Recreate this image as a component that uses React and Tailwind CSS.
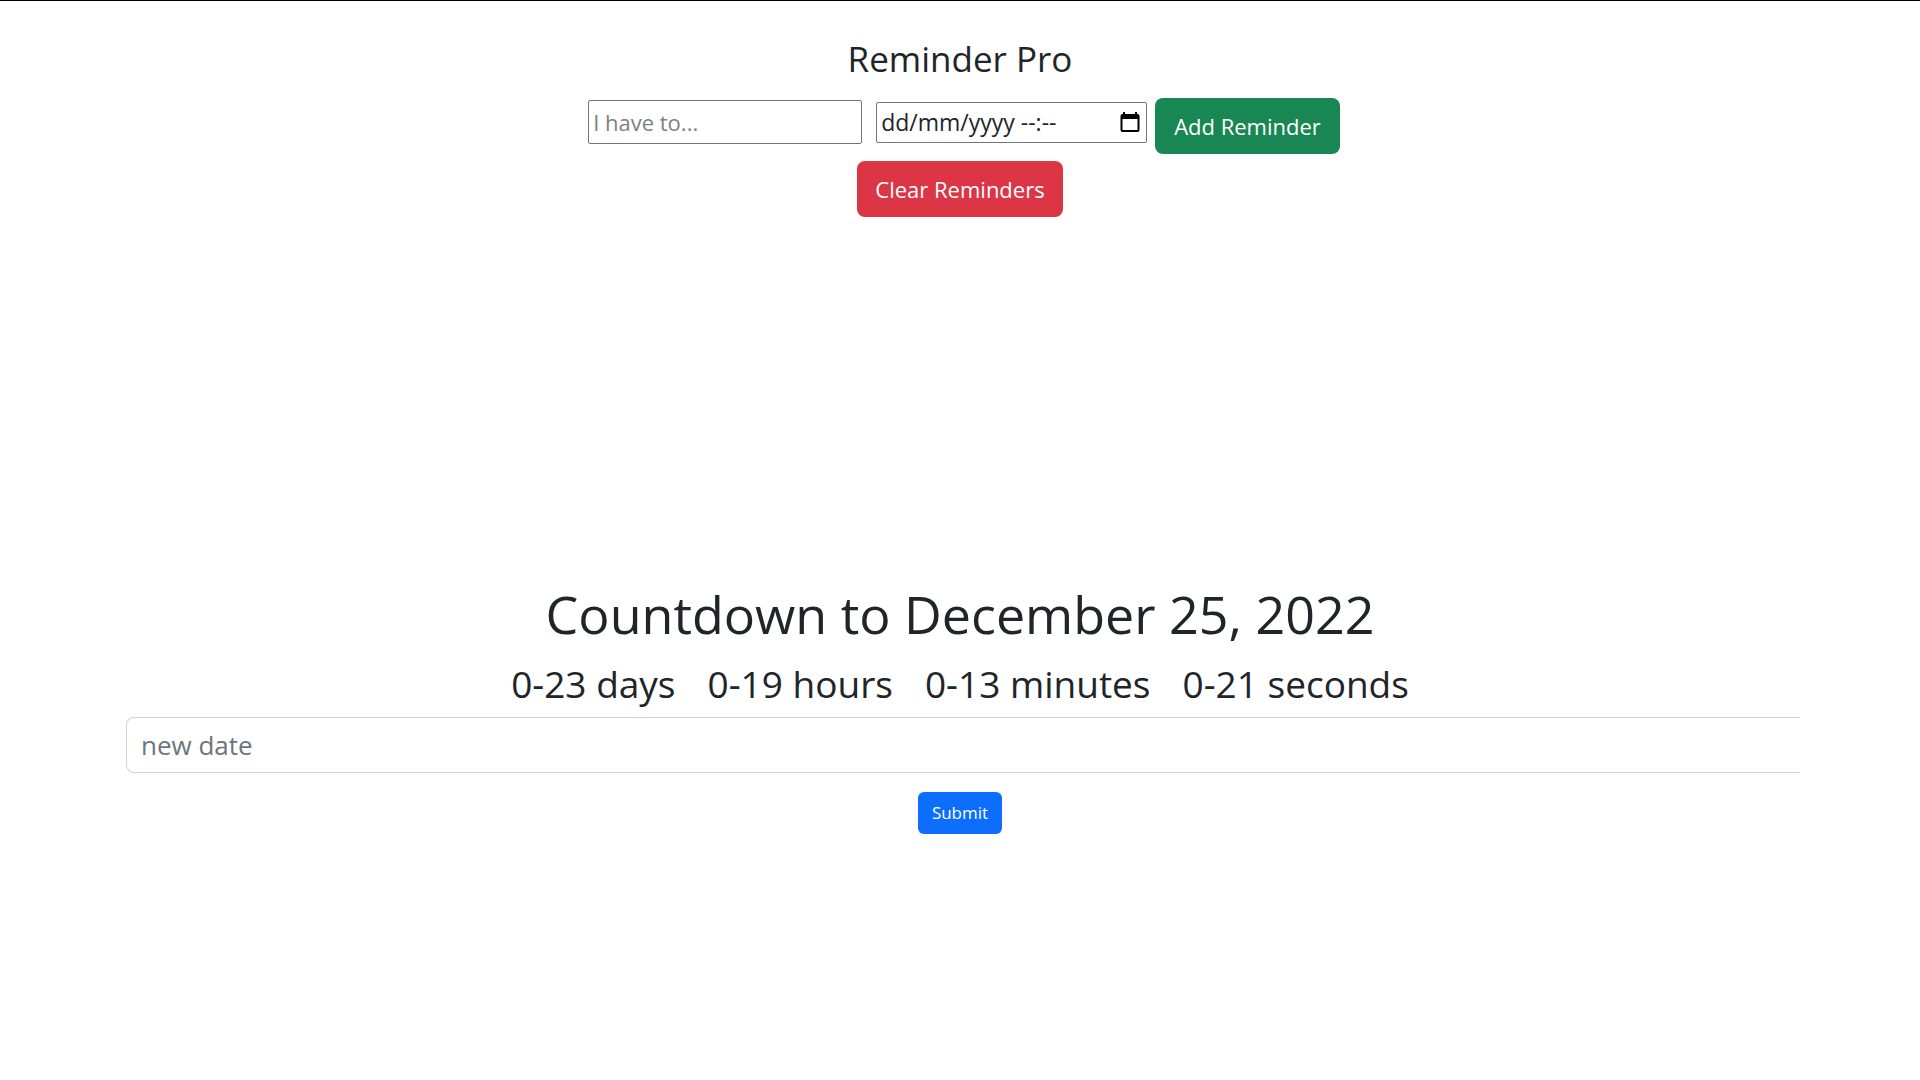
const countdown = [
  { value: "0-23", unit: "days" },
  { value: "0-19", unit: "hours" },
  { value: "0-13", unit: "minutes" },
  { value: "0-21", unit: "seconds" },
];

function CalendarIcon() {
  return (
    <svg viewBox="0 0 20 22" className="h-[22px] w-5" fill="currentColor" aria-hidden="true">
      <path
        fillRule="evenodd"
        d="M3 0h2v2h10V0h2v2h.5A2 2 0 0 1 19.500 4v14a2 2 0 0 1-2 2h-15a2 2 0 0 1-2-2V4a2 2 0 0 1 2-2H3zM2.500 7v11h15V7z"
      />
    </svg>
  );
}

function ReminderForm() {
  return (
    <section className="flex flex-col items-center">
      <h1 className="text-[35px] leading-[46px]">Reminder Pro</h1>
      <form className="mt-4 flex flex-wrap items-start justify-center pl-2" onSubmit={(e) => e.preventDefault()}>
        <input
          type="text"
          aria-label="Reminder"
          placeholder="I have to..."
          className="mt-0.5 h-11 w-[274px] rounded-xs border border-[#767676] px-1 text-[22px] placeholder:text-[#808080]"
        />
        <div className="mt-1 ml-3.5 flex h-[41px] w-[271px] items-center rounded-xs border border-[#767676] pr-1.5 pl-1">
          <input
            type="text"
            aria-label="Reminder date and time"
            placeholder="dd/mm/yyyy --:--"
            className="min-w-0 flex-1 text-[23px] outline-none placeholder:text-[#212529]"
          />
          <button type="button" aria-label="Open calendar" className="text-black">
            <CalendarIcon />
          </button>
        </div>
        <button type="submit" className="ml-2 h-14 rounded-lg bg-[#198754] px-[19px] text-[22px] text-white">
          Add Reminder
        </button>
      </form>
      <button type="button" className="mt-[7px] h-14 rounded-lg bg-[#dc3545] px-[18px] text-[22px] text-white">
        Clear Reminders
      </button>
    </section>
  );
}

function Countdown() {
  return (
    <section className="mt-[364px] flex flex-col items-center">
      <h2 className="text-[52px] leading-[66px]">Countdown to December 25, 2022</h2>
      <div className="mt-3.5 flex gap-8 text-[37px] leading-[46px]">
        {countdown.map(({ value, unit }) => (
          <span key={unit}>
            {value} {unit}
          </span>
        ))}
      </div>
      <form className="mt-2.5 flex w-full flex-col items-center" onSubmit={(e) => e.preventDefault()}>
        <div className="w-full pl-1.5">
          <input
            type="text"
            aria-label="New date"
            placeholder="new date"
            className="block h-14 w-full rounded-l-lg border border-r-0 border-[#ced4da] px-3.5 text-[26px] placeholder:text-[#6c757d]"
          />
        </div>
        <button type="submit" className="mt-[19px] h-[42px] rounded-md bg-[#0d6efd] px-3.5 text-[17px] text-white">
          Submit
        </button>
      </form>
    </section>
  );
}

export default function App() {
  return (
    <main className="min-h-screen border-t border-black bg-white px-[120px] pt-[35px] font-['Open_Sans','Noto_Sans',sans-serif] text-[#212529]">
      <ReminderForm />
      <Countdown />
    </main>
  );
}
